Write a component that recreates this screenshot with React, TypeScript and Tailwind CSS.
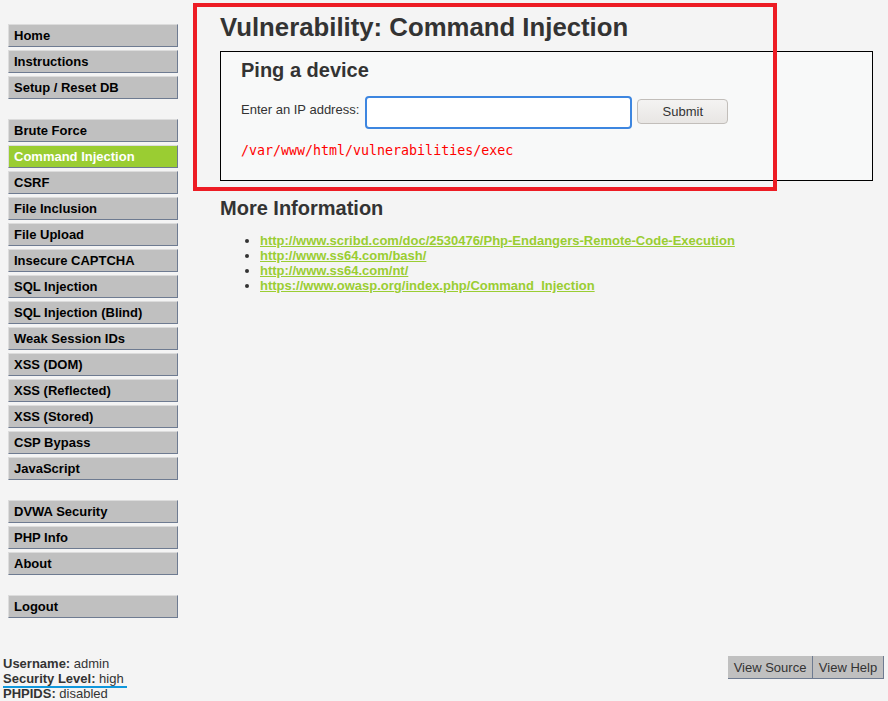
const menuGroups: string[][] = [
  ["Home", "Instructions", "Setup / Reset DB"],
  [
    "Brute Force",
    "Command Injection",
    "CSRF",
    "File Inclusion",
    "File Upload",
    "Insecure CAPTCHA",
    "SQL Injection",
    "SQL Injection (Blind)",
    "Weak Session IDs",
    "XSS (DOM)",
    "XSS (Reflected)",
    "XSS (Stored)",
    "CSP Bypass",
    "JavaScript",
  ],
  ["DVWA Security", "PHP Info", "About"],
  ["Logout"],
];

const links = [
  "http://www.scribd.com/doc/2530476/Php-Endangers-Remote-Code-Execution",
  "http://www.ss64.com/bash/",
  "http://www.ss64.com/nt/",
  "https://www.owasp.org/index.php/Command_Injection",
];

const MenuItem: React.FC<{ label: string }> = ({ label }) => {
  const active = label === "Command Injection";
  return (
    <li className="mb-[3px]">
      <a
        href="#"
        className={
          "block h-[23px] pl-[5px] leading-[21px] font-bold border border-t-[#dcdcdc] border-l-[#dcdcdc] border-b-[#6e7b91] border-r-[#6e7b91] " +
          (active ? "bg-[#9acd32] text-white" : "bg-[#c0c0c0] text-black")
        }
      >
        {label}
      </a>
    </li>
  );
};

export default function App() {
  return (
    <div className="relative min-h-[701px] bg-[#f4f4f4] text-[13px] leading-[15px] text-[#333] font-['Liberation_Sans',Arial,sans-serif]">
      <div className="flex">
        <nav className="w-[178px] shrink-0 pl-2 pt-[24px]">
          {menuGroups.map((group, i) => (
            <ul key={i} className={i > 0 ? "mt-[20px]" : ""}>
              {group.map((label) => (
                <MenuItem key={label} label={label} />
              ))}
            </ul>
          ))}
        </nav>

        <main className="ml-[42px] mr-[15px] flex-1 pt-[12px]">
          <h1 className="text-[25.75px] leading-[30px] font-bold text-[#333]">
            Vulnerability: Command Injection
          </h1>

          <div className="mt-[9px] border border-black bg-[#f8f9f9] px-[20px] pt-[6px] pb-[21px]">
            <h2 className="text-[20px] leading-[24px] font-bold text-[#333]">Ping a device</h2>
            <form className="mt-[14px] flex items-start" onSubmit={(e) => e.preventDefault()}>
              <label className="mt-[6px] mr-[6px]">Enter an IP address:</label>
              <input
                type="text"
                className="h-[33px] w-[267px] rounded-[4px] border-2 border-[#3d86e0] bg-white outline-none"
              />
              <button
                type="submit"
                className="ml-[5px] mt-[3px] h-[25px] w-[91px] rounded-[4px] border border-[#c2beba] bg-gradient-to-b from-[#f4f3f2] to-[#e8e6e4] text-[13px] text-[#333]"
              >
                Submit
              </button>
            </form>
            <pre className="mt-[14px] text-[13.3px] leading-[16px] text-[#ff0000] font-['DejaVu_Sans_Mono',monospace]">
              /var/www/html/vulnerabilities/exec
            </pre>
          </div>

          <h2 className="mt-[15px] text-[20px] leading-[24px] font-bold text-[#333]">More Information</h2>
          <ul className="mt-[13px] list-disc pl-[40px]">
            {links.map((href) => (
              <li key={href}>
                <a href="#" className="font-bold text-[#9acd32] underline">
                  {href}
                </a>
              </li>
            ))}
          </ul>
        </main>
      </div>

      <footer className="mt-[35px] flex items-start justify-between pl-[3px] pr-[4px] pb-[1px]">
        <div>
          <div>
            <b>Username:</b> admin
          </div>
          <div>
            <b>Security Level:</b> high
          </div>
          <div>
            <b>PHPIDS:</b> disabled
          </div>
        </div>
        <div className="flex">
          <button className="h-[23px] w-[85px] bg-[#c0c0c0] border-r border-b border-[#6e7b91] text-[13px] text-[#333]">
            View Source
          </button>
          <button className="h-[23px] w-[71px] bg-[#c0c0c0] border-r border-b border-[#6e7b91] text-[13px] text-[#333]">
            View Help
          </button>
        </div>
      </footer>

      {/* annotation overlays */}
      <div className="pointer-events-none absolute left-[193px] top-[3px] h-[188px] w-[584px] border-4 border-[#ed1c24]" />
      <div className="pointer-events-none absolute left-[3px] top-[686px] h-[2px] w-[124px] bg-[#0f97dc]" />
    </div>
  );
}
